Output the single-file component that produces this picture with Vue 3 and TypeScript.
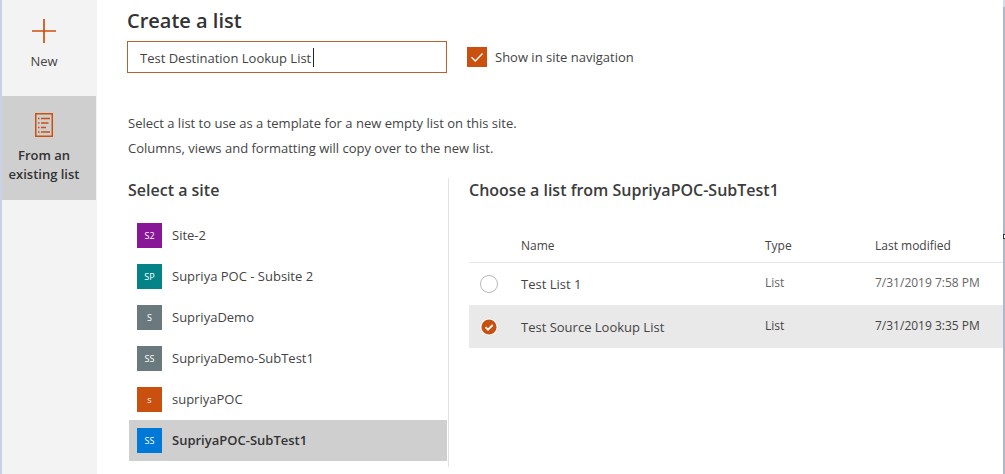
<script setup lang="ts">
import { ref } from 'vue'

interface Site {
  initials: string
  name: string
  color: string
}

interface ListRow {
  name: string
  type: string
  modified: string
}

const sites: Site[] = [
  { initials: 'S2', name: 'Site-2', color: '#881798' },
  { initials: 'SP', name: 'Supriya POC - Subsite 2', color: '#038387' },
  { initials: 'S', name: 'SupriyaDemo', color: '#69797e' },
  { initials: 'SS', name: 'SupriyaDemo-SubTest1', color: '#69797e' },
  { initials: 's', name: 'supriyaPOC', color: '#ca5010' },
  { initials: 'SS', name: 'SupriyaPOC-SubTest1', color: '#0078d7' },
]

const lists: ListRow[] = [
  { name: 'Test List 1', type: 'List', modified: '7/31/2019 7:58 PM' },
  { name: 'Test Source Lookup List', type: 'List', modified: '7/31/2019 3:35 PM' },
]

const title = ref('Test Destination Lookup List')
const showInNav = ref(true)
const selectedSite = ref(5)
const selectedList = ref(1)
</script>

<template>
  <div class="dialog">
    <nav class="rail">
      <button type="button" class="tile">
        <svg class="tile-icon" width="24" height="24" viewBox="0 0 24 24" aria-hidden="true">
          <path d="M12 0V24M0 12H24" stroke="#ca5010" stroke-width="1.7" fill="none" />
        </svg>
        <span>New</span>
      </button>
      <button type="button" class="tile active">
        <svg class="tile-icon" width="18" height="24" viewBox="0 0 18 24" aria-hidden="true">
          <rect x="0.75" y="0.75" width="16.5" height="22.5" fill="none" stroke="#ca5010" stroke-width="1.5" />
          <path
            d="M3 5.500h1.500M3 10h1.500M3 14.500h1.500M3 19h1.500M6 5.500h9M6 10h7.500M6 14.500h5M6 19h9"
            stroke="#ca5010"
            stroke-width="1.3"
            fill="none"
          />
        </svg>
        <span>From an existing list</span>
      </button>
    </nav>

    <main class="content">
      <h1>Create a list</h1>
      <div class="name-row">
        <div class="field">
          <input v-model="title" class="name-input" type="text" aria-label="List name" />
          <span class="caret"></span>
        </div>
        <label class="check">
          <span class="check-box">
            <input v-model="showInNav" type="checkbox" />
            <svg v-if="showInNav" width="20" height="20" viewBox="0 0 20 20" aria-hidden="true">
              <path d="M4.500 10.200L8.300 14L15.500 6.500" stroke="#fff" stroke-width="1.300" fill="none" />
            </svg>
          </span>
          Show in site navigation
        </label>
      </div>

      <p class="intro">
        Select a list to use as a template for a new empty list on this site.<br />
        Columns, views and formatting will copy over to the new list.
      </p>

      <div class="columns">
        <section class="sites">
          <h2>Select a site</h2>
          <ul>
            <li v-for="(site, i) in sites" :key="site.name">
              <button
                type="button"
                class="site"
                :class="{ selected: selectedSite === i }"
                @click="selectedSite = i"
              >
                <span class="badge" :style="{ backgroundColor: site.color }">{{ site.initials }}</span>
                <span>{{ site.name }}</span>
              </button>
            </li>
          </ul>
        </section>

        <section class="lists">
          <h2>Choose a list from {{ sites[selectedSite].name }}</h2>
          <table>
            <colgroup>
              <col class="col-pick" />
              <col class="col-name" />
              <col class="col-type" />
              <col class="col-date" />
            </colgroup>
            <thead>
              <tr>
                <td></td>
                <th scope="col">Name</th>
                <th scope="col">Type</th>
                <th scope="col">Last modified</th>
              </tr>
            </thead>
            <tbody>
              <tr v-for="(row, i) in lists" :key="row.name" :class="{ chosen: selectedList === i }">
                <td>
                  <span class="pick">
                    <input
                      :id="'list-' + i"
                      v-model="selectedList"
                      type="radio"
                      name="list"
                      :value="i"
                    />
                    <svg v-if="selectedList === i" width="20" height="20" viewBox="0 0 20 20" aria-hidden="true">
                      <circle cx="10" cy="10" r="9" fill="#fff" />
                      <circle cx="10" cy="10" r="7.600" fill="#ca5010" />
                      <path d="M6.500 10.200L9 12.700L13.700 8" stroke="#fff" stroke-width="1.800" fill="none" />
                    </svg>
                  </span>
                </td>
                <td class="list-name"><label :for="'list-' + i">{{ row.name }}</label></td>
                <td class="meta">{{ row.type }}</td>
                <td class="meta">{{ row.modified }}</td>
              </tr>
            </tbody>
          </table>
        </section>
      </div>
    </main>
    <div class="edge"><span class="handle"></span></div>
  </div>
</template>

<style>
body {
  background: #fff;
}
</style>

<style scoped>
.dialog {
  display: flex;
  min-height: 100vh;
  box-sizing: border-box;
  border-left: 2px solid #c8d2e4;
  font-family: 'Open Sans', 'Noto Sans', sans-serif;
  font-size: 13px;
  line-height: 19px;
  color: #444;
}

button,
input {
  font: inherit;
  color: inherit;
}

.rail {
  flex: 0 0 95px;
  background: #f3f3f3;
}

.tile {
  display: flex;
  flex-direction: column;
  align-items: center;
  gap: 9px;
  width: 94px;
  min-height: 96px;
  padding: 19px 10px 16px 0;
  box-sizing: border-box;
  border: 0;
  background: transparent;
}

.tile.active {
  min-height: 104px;
  padding: 17px 10px 0 0;
  background: #cfcfcf;
  color: #333;
  font-weight: 600;
}

.tile-icon {
  display: block;
}

.content {
  flex: 1;
  min-width: 0;
  padding: 7px 0 7px 30px;
  box-sizing: border-box;
}

h1 {
  margin: 0;
  font-size: 20px;
  line-height: 28px;
  font-weight: 600;
  color: #333;
}

.name-row {
  display: flex;
  align-items: center;
  gap: 20px;
  margin-top: 6px;
}

.field {
  position: relative;
  flex: 0 1 320px;
}

.name-input {
  display: block;
  width: 100%;
  height: 32px;
  box-sizing: border-box;
  padding: 2px 12px 0;
  border: 1px solid #b9602f;
  border-radius: 0;
  outline: 0;
  background: #fff;
}

.caret {
  position: absolute;
  left: 186px;
  top: 7px;
  width: 1px;
  height: 19px;
  background: #222;
}

.check {
  display: flex;
  align-items: center;
  gap: 8px;
}

.check-box,
.pick {
  display: grid;
  width: 20px;
  height: 20px;
}

.check-box > *,
.pick > * {
  grid-area: 1 / 1;
}

.check-box input,
.pick input {
  appearance: none;
  width: 100%;
  height: 100%;
  margin: 0;
  box-sizing: border-box;
}

.check-box input {
  border: 1px solid #ca5010;
}

.check-box input:checked {
  background: #ca5010;
}

.check-box svg,
.pick svg {
  display: block;
  z-index: 1;
  pointer-events: none;
}

.intro {
  margin: 38px 0 0;
  padding-left: 1px;
  line-height: 25px;
}

.columns {
  display: grid;
  grid-template-columns: minmax(200px, 321px) minmax(0, 1fr);
  margin-top: 17px;
  padding-left: 1px;
}

.sites {
  padding-bottom: 6px;
  border-right: 1px solid #e2e2e2;
}

h2 {
  margin: 0;
  font-size: 16px;
  line-height: 24px;
  font-weight: 600;
  color: #3c3c3c;
}

ul {
  margin: 13px 1px 0;
  padding: 0;
  list-style: none;
}

.site {
  display: flex;
  align-items: center;
  gap: 10px;
  width: 100%;
  height: 41px;
  padding: 0 8px;
  border: 0;
  background: transparent;
  text-align: left;
}

.site.selected {
  background: #cfcfcf;
  color: #333;
  font-weight: 600;
}

.badge {
  display: grid;
  place-items: center;
  width: 25px;
  height: 25px;
  color: #fff;
  font-size: 9px;
  line-height: 12px;
  font-weight: 400;
}

.lists {
  padding-left: 20px;
}

table {
  width: 100%;
  margin-top: 28px;
  border-collapse: collapse;
  table-layout: fixed;
}

.col-pick {
  width: 52px;
}

.col-type {
  width: 110px;
}

.col-date {
  width: 128px;
}

th,
td {
  padding: 0;
  text-align: left;
  font-size: 12px;
  line-height: 16px;
  font-weight: 400;
  white-space: nowrap;
}

thead tr {
  height: 32px;
  border-bottom: 1px solid #e6e6e6;
}

tbody tr {
  height: 43px;
}

tbody tr.chosen {
  background: #e9e9e9;
}

.pick {
  margin-left: 10px;
}

.pick input {
  width: 18px;
  height: 18px;
  margin: 1px;
  border: 1px solid #b8b8b8;
  border-radius: 50%;
  background: #fff;
}

.list-name {
  font-size: 13px;
}

.meta {
  padding-bottom: 2px;
  color: #666;
}

.chosen .meta {
  color: #444;
}

.edge {
  position: relative;
  flex: 0 0 2px;
  border-top: 7px solid #d3dceb;
  background: #adb9cb;
}

.handle {
  position: absolute;
  right: 0;
  top: 227px;
  width: 2px;
  height: 5px;
  box-sizing: border-box;
  border: 1px solid #333;
  border-right: 0;
  background: #fff;
}
</style>
